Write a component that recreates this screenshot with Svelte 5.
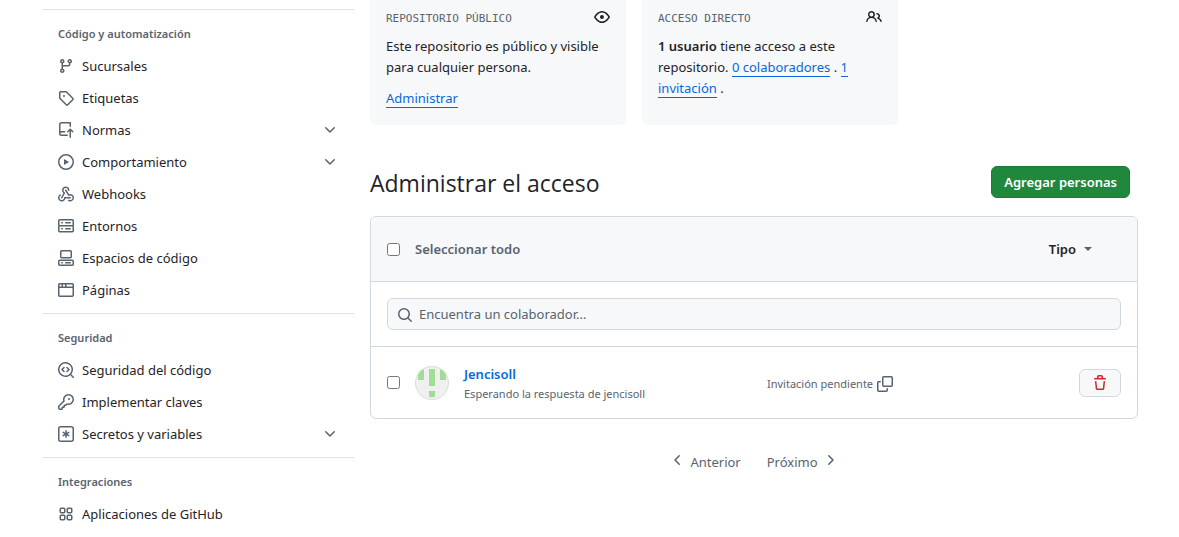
<script>
  const icons = {
    branch: 'M9.5 3.25a2.25 2.25 0 1 1 3 2.122V6A2.5 2.5 0 0 1 10 8.5H6a1 1 0 0 0-1 1v1.128a2.251 2.251 0 1 1-1.5 0V5.372a2.25 2.25 0 1 1 1.5 0v1.836A2.493 2.493 0 0 1 6 7h4a1 1 0 0 0 1-1v-.628A2.25 2.25 0 0 1 9.5 3.25Zm-6 0a.75.75 0 1 0 1.5 0 .75.75 0 0 0-1.5 0Zm8.25-.75a.75.75 0 1 0 0 1.5.75.75 0 0 0 0-1.5ZM4.25 12a.75.75 0 1 0 0 1.5.75.75 0 0 0 0-1.5Z',
    tag: 'M1 7.775V2.75C1 1.784 1.784 1 2.75 1h5.025c.464 0 .91.184 1.238.513l6.25 6.25a1.75 1.75 0 0 1 0 2.474l-5.026 5.026a1.75 1.75 0 0 1-2.474 0l-6.25-6.25A1.752 1.752 0 0 1 1 7.775Zm1.5 0c0 .066.026.13.073.177l6.25 6.25a.25.25 0 0 0 .354 0l5.025-5.025a.25.25 0 0 0 0-.354l-6.25-6.25a.25.25 0 0 0-.177-.073H2.75a.25.25 0 0 0-.25.25ZM6 5a1 1 0 1 1 0 2 1 1 0 0 1 0-2Z',
    push: 'M1 2.5A2.5 2.5 0 0 1 3.5 0h8.75a.75.75 0 0 1 .75.75v3.5a.75.75 0 0 1-1.5 0V1.5h-8a1 1 0 0 0-1 1v6.708A2.493 2.493 0 0 1 3.5 9h3.25a.75.75 0 0 1 0 1.5H3.5a1 1 0 0 0 0 2h5.75a.75.75 0 0 1 0 1.5H3.5A2.5 2.5 0 0 1 1 11.5Zm13.23 7.79-1.225-1.224v6.184a.75.75 0 0 1-1.5 0V9.066L10.28 10.29a.75.75 0 0 1-1.06-1.061l2.505-2.504a.75.75 0 0 1 1.06 0L15.29 9.23a.751.751 0 0 1-.018 1.042.751.751 0 0 1-1.042.018Z',
    play: 'M8 0a8 8 0 1 1 0 16A8 8 0 0 1 8 0ZM1.5 8a6.5 6.5 0 1 0 13 0 6.5 6.5 0 0 0-13 0Zm4.879-2.773 4.264 2.559a.25.25 0 0 1 0 .428l-4.264 2.559A.25.25 0 0 1 6 10.559V5.442a.25.25 0 0 1 .379-.215Z',
    webhook: 'M5.5 4.25a2.25 2.25 0 0 1 4.5 0 .75.75 0 0 0 1.5 0 3.75 3.75 0 1 0-6.14 2.889l-2.272 4.258a.75.75 0 0 0 1.324.706L7 7.25a.75.75 0 0 0-.309-1.015A2.25 2.25 0 0 1 5.5 4.25Z M7.364 3.607a.75.75 0 0 1 1.03.257l2.608 4.349a3.75 3.75 0 1 1-.628 6.785.75.75 0 0 1 .752-1.299 2.25 2.25 0 1 0-.033-3.88.75.75 0 0 1-1.03-.256L7.107 4.636a.75.75 0 0 1 .257-1.03Z M2.9 8.776A.75.75 0 0 1 2.625 9.8 2.25 2.25 0 1 0 6 11.75a.75.75 0 0 1 .75-.751h5.5a.75.75 0 0 1 0 1.5H7.425a3.751 3.751 0 1 1-5.55-3.998.75.75 0 0 1 1.024.274Z',
    server: 'M1.75 1h12.5c.966 0 1.75.784 1.75 1.75v4c0 .372-.116.717-.314 1 .198.283.314.628.314 1v4a1.75 1.75 0 0 1-1.75 1.75H1.75A1.75 1.75 0 0 1 0 12.75v-4c0-.358.109-.707.314-1a1.739 1.739 0 0 1-.314-1v-4C0 1.784.784 1 1.75 1ZM1.5 2.75v4c0 .138.112.25.25.25h12.5a.25.25 0 0 0 .25-.25v-4a.25.25 0 0 0-.25-.25H1.75a.25.25 0 0 0-.25.25Zm.25 5.75a.25.25 0 0 0-.25.25v4c0 .138.112.25.25.25h12.5a.25.25 0 0 0 .25-.25v-4a.25.25 0 0 0-.25-.25ZM7 4.75A.75.75 0 0 1 7.75 4h4.5a.75.75 0 0 1 0 1.5h-4.5A.75.75 0 0 1 7 4.75ZM7.75 10h4.5a.75.75 0 0 1 0 1.5h-4.5a.75.75 0 0 1 0-1.5ZM3 4.75A.75.75 0 0 1 3.75 4h.5a.75.75 0 0 1 0 1.5h-.5A.75.75 0 0 1 3 4.75ZM3.75 10h.5a.75.75 0 0 1 0 1.5h-.5a.75.75 0 0 1 0-1.5Z',
    codespaces: 'M0 11.25c0-.966.784-1.75 1.75-1.75h12.5c.966 0 1.75.784 1.75 1.75v3A1.75 1.75 0 0 1 14.25 16H1.75A1.75 1.75 0 0 1 0 14.25Zm2-9.5C2 .784 2.784 0 3.75 0h8.5C13.216 0 14 .784 14 1.75v5a1.75 1.75 0 0 1-1.75 1.75h-8.5A1.75 1.75 0 0 1 2 6.75Zm1.75-.25a.25.25 0 0 0-.25.25v5c0 .138.112.25.25.25h8.5a.25.25 0 0 0 .25-.25v-5a.25.25 0 0 0-.25-.25Zm-2 9.5a.25.25 0 0 0-.25.25v3c0 .138.112.25.25.25h12.5a.25.25 0 0 0 .25-.25v-3a.25.25 0 0 0-.25-.25Z M7 12.75a.75.75 0 0 1 .75-.75h4.5a.75.75 0 0 1 0 1.5h-4.5a.75.75 0 0 1-.75-.75Zm-4 0a.75.75 0 0 1 .75-.75h.5a.75.75 0 0 1 0 1.5h-.5a.75.75 0 0 1-.75-.75Z',
    browser: 'M0 2.75C0 1.784.784 1 1.75 1h12.5c.966 0 1.75.784 1.75 1.75v10.5A1.75 1.75 0 0 1 14.25 15H1.75A1.75 1.75 0 0 1 0 13.25ZM14.5 6h-13v7.25c0 .138.112.25.25.25h12.5a.25.25 0 0 0 .25-.25Zm-6-3.5v2h6V2.75a.25.25 0 0 0-.25-.25ZM5 2.5v2h2v-2Zm-3.25 0a.25.25 0 0 0-.25.25V4.5h2v-2Z',
    codescan: 'M8.47 4.97a.75.75 0 0 0 0 1.06L9.94 7.5 8.47 8.97a.75.75 0 1 0 1.06 1.06l2-2a.75.75 0 0 0 0-1.06l-2-2a.75.75 0 0 0-1.06 0ZM6.53 6.03a.75.75 0 0 0-1.06-1.06l-2 2a.75.75 0 0 0 0 1.06l2 2a.75.75 0 1 0 1.06-1.06L5.06 7.5l1.47-1.47Z M12.246 13.307a7.501 7.501 0 1 1 1.06-1.06l2.474 2.473a.749.749 0 0 1-.326 1.275.749.749 0 0 1-.734-.215ZM1.5 7.5a6.002 6.002 0 0 0 3.608 5.504 6.002 6.002 0 0 0 6.486-1.117.748.748 0 0 1 .292-.293A6 6 0 1 0 1.5 7.5Z',
    key: 'M10.5 0a5.499 5.499 0 1 1-1.288 10.848l-.932.932a.749.749 0 0 1-.53.22H7v.75a.749.749 0 0 1-.22.53l-.5.5a.749.749 0 0 1-.53.22H5v.75a.749.749 0 0 1-.22.53l-.5.5a.749.749 0 0 1-.53.22h-2A1.75 1.75 0 0 1 0 14.25v-2c0-.199.079-.389.22-.53l4.932-4.932A5.5 5.5 0 0 1 10.5 0Zm-4 5.5c-.001.431.069.86.205 1.269a.75.75 0 0 1-.181.768L1.5 12.56v1.69c0 .138.112.25.25.25h1.69l.06-.06v-1.19a.75.75 0 0 1 .75-.75h1.19l.06-.06v-1.19a.75.75 0 0 1 .75-.75h1.19l1.023-1.025a.75.75 0 0 1 .768-.18A4 4 0 1 0 6.5 5.5ZM11 6a1 1 0 1 1 0-2 1 1 0 0 1 0 2Z',
    asterisk: 'M0 2.75A2.75 2.75 0 0 1 2.75 0h10.5A2.75 2.75 0 0 1 16 2.75v10.5A2.75 2.75 0 0 1 13.25 16H2.75A2.75 2.75 0 0 1 0 13.25ZM2.75 1.5c-.69 0-1.25.56-1.25 1.25v10.5c0 .69.56 1.25 1.25 1.25h10.5c.69 0 1.25-.56 1.25-1.25V2.75c0-.69-.56-1.25-1.25-1.25Z M8 4a.75.75 0 0 1 .75.75V6.7l1.69-.975a.75.75 0 0 1 .75 1.3L9.5 8l1.69.976a.75.75 0 0 1-.75 1.298L8.75 9.3v1.951a.75.75 0 0 1-1.5 0V9.299l-1.69.976a.75.75 0 0 1-.75-1.3L6.5 8l-1.69-.975a.75.75 0 0 1 .75-1.3l1.69.976V4.75A.75.75 0 0 1 8 4Z',
    apps: 'M1.5 3.25c0-.966.784-1.75 1.75-1.75h2.5c.966 0 1.75.784 1.75 1.75v2.5A1.75 1.75 0 0 1 5.75 7.5h-2.5A1.75 1.75 0 0 1 1.5 5.75Zm7 0c0-.966.784-1.75 1.75-1.75h2.5c.966 0 1.75.784 1.75 1.75v2.5a1.75 1.75 0 0 1-1.75 1.75h-2.5A1.75 1.75 0 0 1 8.5 5.75Zm-7 7c0-.966.784-1.75 1.75-1.75h2.5c.966 0 1.75.784 1.75 1.75v2.5a1.75 1.75 0 0 1-1.75 1.75h-2.5a1.75 1.75 0 0 1-1.75-1.75Zm7 0c0-.966.784-1.75 1.75-1.75h2.5c.966 0 1.75.784 1.75 1.75v2.5a1.75 1.75 0 0 1-1.75 1.75h-2.5a1.75 1.75 0 0 1-1.75-1.75ZM3.25 3a.25.25 0 0 0-.25.25v2.5c0 .138.112.25.25.25h2.5A.25.25 0 0 0 6 5.75v-2.5A.25.25 0 0 0 5.75 3Zm7 0a.25.25 0 0 0-.25.25v2.5c0 .138.112.25.25.25h2.5a.25.25 0 0 0 .25-.25v-2.5a.25.25 0 0 0-.25-.25Zm-7 7a.25.25 0 0 0-.25.25v2.5c0 .138.112.25.25.25h2.5a.25.25 0 0 0 .25-.25v-2.5a.25.25 0 0 0-.25-.25Zm7 0a.25.25 0 0 0-.25.25v2.5c0 .138.112.25.25.25h2.5a.25.25 0 0 0 .25-.25v-2.5a.25.25 0 0 0-.25-.25Z',
    eye: 'M8 2c1.981 0 3.671.992 4.933 2.078 1.27 1.091 2.187 2.345 2.637 3.023a1.62 1.62 0 0 1 0 1.798c-.45.678-1.367 1.932-2.637 3.023C11.67 13.008 9.981 14 8 14c-1.981 0-3.671-.992-4.933-2.078C1.797 10.83.88 9.576.43 8.898a1.62 1.62 0 0 1 0-1.798c.45-.677 1.367-1.931 2.637-3.022C4.33 2.992 6.019 2 8 2ZM1.679 7.932a.12.12 0 0 0 0 .136c.411.622 1.241 1.75 2.366 2.717C5.176 11.758 6.527 12.5 8 12.5c1.473 0 2.825-.742 3.955-1.715 1.124-.967 1.954-2.096 2.366-2.717a.12.12 0 0 0 0-.136c-.412-.621-1.242-1.75-2.366-2.717C10.824 4.242 9.473 3.5 8 3.5c-1.473 0-2.825.742-3.955 1.715-1.124.967-1.954 2.096-2.366 2.717ZM8 10a2 2 0 1 1-.001-3.999A2 2 0 0 1 8 10Z',
    people: 'M2 5.5a3.5 3.5 0 1 1 5.898 2.549 5.508 5.508 0 0 1 3.034 4.084.75.75 0 1 1-1.482.235 4 4 0 0 0-7.9 0 .75.75 0 0 1-1.482-.236A5.507 5.507 0 0 1 3.102 8.05 3.493 3.493 0 0 1 2 5.5ZM11 4a3.001 3.001 0 0 1 2.22 5.018 5.01 5.01 0 0 1 2.56 3.012.749.749 0 0 1-.885.954.752.752 0 0 1-.549-.514 3.507 3.507 0 0 0-2.522-2.372.75.75 0 0 1-.574-.73v-.352a.75.75 0 0 1 .416-.672A1.5 1.5 0 0 0 11 5.5.75.75 0 0 1 11 4Zm-5.5-.5a2 2 0 1 0-.001 3.999A2 2 0 0 0 5.5 3.5Z',
    search: 'M10.68 11.74a6 6 0 0 1-7.922-8.982 6 6 0 0 1 8.982 7.922l3.04 3.04a.749.749 0 0 1-.326 1.275.749.749 0 0 1-.734-.215ZM11.5 7a4.499 4.499 0 1 0-8.997 0A4.499 4.499 0 0 0 11.5 7Z',
    trash: 'M11 1.75V3h2.25a.75.75 0 0 1 0 1.5H2.75a.75.75 0 0 1 0-1.5H5V1.75C5 .784 5.784 0 6.75 0h2.5C10.216 0 11 .784 11 1.75ZM4.496 6.675l.66 6.6a.25.25 0 0 0 .249.225h5.19a.25.25 0 0 0 .249-.225l.66-6.6a.75.75 0 0 1 1.492.149l-.66 6.6A1.748 1.748 0 0 1 10.595 15h-5.19a1.75 1.75 0 0 1-1.741-1.575l-.66-6.6a.75.75 0 1 1 1.492-.15ZM6.5 1.75V3h3V1.75a.25.25 0 0 0-.25-.25h-2.5a.25.25 0 0 0-.25.25Z',
    copy: 'M0 6.75C0 5.784.784 5 1.75 5h1.5a.75.75 0 0 1 0 1.5h-1.5a.25.25 0 0 0-.25.25v7.5c0 .138.112.25.25.25h7.5a.25.25 0 0 0 .25-.25v-1.5a.75.75 0 0 1 1.5 0v1.5A1.75 1.75 0 0 1 9.25 16h-7.5A1.75 1.75 0 0 1 0 14.25Z M5 1.75C5 .784 5.784 0 6.75 0h7.5C15.216 0 16 .784 16 1.75v7.5A1.75 1.75 0 0 1 14.25 11h-7.5A1.75 1.75 0 0 1 5 9.25Zm1.75-.25a.25.25 0 0 0-.25.25v7.5c0 .138.112.25.25.25h7.5a.25.25 0 0 0 .25-.25v-7.5a.25.25 0 0 0-.25-.25Z',
    down: 'M12.78 5.22a.749.749 0 0 1 0 1.06l-4.25 4.25a.749.749 0 0 1-1.06 0L3.22 6.28a.749.749 0 1 1 1.06-1.06L8 8.939l3.72-3.719a.749.749 0 0 1 1.06 0Z',
    left: 'M9.78 12.78a.75.75 0 0 1-1.06 0L4.47 8.53a.75.75 0 0 1 0-1.06l4.25-4.25a.751.751 0 0 1 1.06 1.06L6.06 8l3.72 3.72a.75.75 0 0 1 0 1.06Z',
    right: 'M6.22 3.22a.75.75 0 0 1 1.06 0l4.25 4.25a.75.75 0 0 1 0 1.06l-4.25 4.25a.751.751 0 0 1-1.06-1.06L9.94 8 6.22 4.28a.75.75 0 0 1 0-1.06Z',
  };

  const groups = [
    {
      title: 'Código y automatización',
      items: [
        { label: 'Sucursales', icon: 'branch' },
        { label: 'Etiquetas', icon: 'tag' },
        { label: 'Normas', icon: 'push', expandable: true },
        { label: 'Comportamiento', icon: 'play', expandable: true },
        { label: 'Webhooks', icon: 'webhook' },
        { label: 'Entornos', icon: 'server' },
        { label: 'Espacios de código', icon: 'codespaces' },
        { label: 'Páginas', icon: 'browser' },
      ],
    },
    {
      title: 'Seguridad',
      items: [
        { label: 'Seguridad del código', icon: 'codescan' },
        { label: 'Implementar claves', icon: 'key' },
        { label: 'Secretos y variables', icon: 'asterisk', expandable: true },
      ],
    },
    {
      title: 'Integraciones',
      items: [{ label: 'Aplicaciones de GitHub', icon: 'apps' }],
    },
  ];
</script>

{#snippet icon(name, size = 16)}
  <svg class="icon" width={size} height={size} viewBox="0 0 16 16" aria-hidden="true"><path d={icons[name]} /></svg>
{/snippet}

<div class="layout">
  <nav class="sidebar">
    {#each groups as group}
      <section class="group">
        <h3>{group.title}</h3>
        <ul>
          {#each group.items as item}
            <li>
              {#if item.expandable}
                <button type="button" class="nav-item">
                  {@render icon(item.icon)}
                  <span class="nav-label">{item.label}</span>
                  {@render icon('down')}
                </button>
              {:else}
                <a class="nav-item" href="#top">
                  {@render icon(item.icon)}
                  <span class="nav-label">{item.label}</span>
                </a>
              {/if}
            </li>
          {/each}
        </ul>
      </section>
    {/each}
  </nav>

  <main>
    <div class="cards">
      <section class="card">
        <header><h4>REPOSITORIO PÚBLICO</h4>{@render icon('eye')}</header>
        <p>Este repositorio es público y visible para cualquier persona.</p>
        <p><a href="#top">Administrar</a></p>
      </section>
      <section class="card">
        <header><h4>ACCESO DIRECTO</h4>{@render icon('people')}</header>
        <p>
          <strong>1 usuario</strong> tiene acceso a este repositorio. <a href="#top">0 colaboradores</a> . <a href="#top">1 invitación</a> .
        </p>
      </section>
    </div>

    <div class="title-row">
      <h2>Administrar el acceso</h2>
      <button type="button" class="primary">Agregar personas</button>
    </div>

    <div class="box">
      <div class="box-head">
        <label class="select-all"><input type="checkbox" /><span>Seleccionar todo</span></label>
        <button type="button" class="type">Tipo<span class="caret"></span></button>
      </div>
      <div class="box-search">
        <label class="search">
          {@render icon('search')}
          <input type="text" placeholder="Encuentra un colaborador..." aria-label="Encuentra un colaborador..." />
        </label>
      </div>
      <div class="member">
        <input type="checkbox" aria-label="Jencisoll" />
        <svg class="avatar" width="34" height="34" viewBox="0 0 34 34" aria-hidden="true">
          <defs><clipPath id="round"><circle cx="17" cy="17" r="17" /></clipPath></defs>
          <g clip-path="url(#round)">
            <rect width="34" height="34" fill="#f0f0f0" />
            <path fill="#a1dd97" d="M3 3h6v11H3zM14 3h6v17h-6zM25 3h6v11h-6zM14 25h6v6h-6z" />
          </g>
          <circle cx="17" cy="17" r="16.5" fill="none" stroke="#dcdfe2" />
        </svg>
        <div class="who">
          <a href="#top">Jencisoll</a>
          <span>Esperando la respuesta de jencisoll</span>
        </div>
        <div class="status">
          <span>Invitación pendiente</span>
          <button type="button" class="copy" aria-label="Copiar">{@render icon('copy')}</button>
        </div>
        <button type="button" class="remove" aria-label="Eliminar">{@render icon('trash')}</button>
      </div>
    </div>

    <div class="pager">
      <button type="button">{@render icon('left')}<span>Anterior</span></button>
      <button type="button"><span>Próximo</span>{@render icon('right')}</button>
    </div>
  </main>
</div>

<style>
  :global(body) {
    margin: 0;
    background: #fff;
  }

  .layout {
    display: grid;
    grid-template-columns: 312px minmax(0, 1fr);
    gap: 16px;
    padding: 0 41px 0 42px;
    color: #1f2328;
    font: 13px/21px 'Noto Sans', sans-serif;
  }

  h2, h3, h4, p, ul {
    margin: 0;
    padding: 0;
  }

  button, input {
    font: inherit;
    color: inherit;
  }

  button {
    margin: 0;
    padding: 0;
    border: 0;
    background: none;
    cursor: pointer;
  }

  a {
    color: #0969da;
  }

  .icon {
    display: block;
    flex: none;
    fill: currentColor;
  }

  .sidebar {
    padding-top: 9px;
  }

  .group {
    padding: 8px 16px 7px;
    border-top: 1px solid #dfe4e8;
  }

  .group h3 {
    color: #59636e;
    font-size: 11px;
    font-weight: 600;
    line-height: 32px;
  }

  .group ul {
    list-style: none;
  }

  .nav-item {
    display: flex;
    align-items: center;
    gap: 8px;
    width: 100%;
    height: 32px;
    color: #59636e;
    text-align: left;
    text-decoration: none;
  }

  .nav-label {
    flex: 1;
    color: #1f2328;
  }

  .cards {
    display: grid;
    grid-template-columns: repeat(2, calc(100% / 3));
    gap: 16px;
    min-height: 125px;
  }

  .card {
    padding: 8px 16px 16px;
    border-radius: 0 0 6px 6px;
    background: #f6f8fa;
  }

  .card header {
    display: flex;
    align-items: flex-start;
    justify-content: space-between;
    height: 20px;
    margin-bottom: 8px;
  }

  .card header :global(.icon) {
    margin-top: 1px;
  }

  .card h4 {
    color: #59636e;
    font: 11px/21px 'DejaVu Sans Mono', monospace;
  }

  .card p + p {
    margin-top: 10px;
  }

  .card a {
    text-decoration: none;
    border-bottom: 1px solid #0969da;
  }

  strong {
    font-weight: 600;
  }

  .title-row {
    display: flex;
    align-items: center;
    justify-content: space-between;
    margin: 41px 8px 18px 0;
  }

  h2 {
    font-family: 'Open Sans', sans-serif;
    font-size: 23px;
    font-weight: 400;
    line-height: 30px;
    padding-top: 2px;
  }

  .primary {
    height: 32px;
    padding: 0 12px;
    border: 1px solid #1c7a36;
    border-radius: 6px;
    background: #1f883d;
    color: #fff;
    font-weight: 600;
  }

  .box {
    border: 1px solid #d1d9e0;
    border-radius: 6px;
    overflow: hidden;
  }

  .box-head {
    display: flex;
    align-items: center;
    justify-content: space-between;
    height: 64px;
    padding: 0 45px 0 16px;
    background: #f6f8fa;
  }

  input[type='checkbox'] {
    width: 13px;
    height: 13px;
    margin: 0;
  }

  .select-all {
    display: flex;
    align-items: center;
    gap: 15px;
    color: #59636e;
    font-weight: 600;
  }

  .type {
    display: flex;
    align-items: center;
    gap: 8px;
    font-weight: 600;
  }

  .caret {
    border: 4px solid transparent;
    border-top-color: #59636e;
    border-bottom: 0;
  }

  .box-search {
    padding: 16px;
    border-top: 1px solid #d1d9e0;
    border-bottom: 1px solid #d1d9e0;
  }

  .search {
    display: flex;
    align-items: center;
    gap: 6px;
    height: 30px;
    padding: 0 9px;
    border: 1px solid #d1d9e0;
    border-radius: 6px;
    background: #f6f8fa;
    color: #59636e;
  }

  .search :global(.icon) {
    margin-top: 2px;
  }

  .search input {
    flex: 1;
    min-width: 0;
    padding: 0;
    border: 0;
    outline: 0;
    background: none;
  }

  .search input::placeholder {
    color: #59636e;
    opacity: 1;
  }

  .member {
    display: grid;
    grid-template-columns: 13px 49px minmax(0, 318fr) minmax(0, 312fr) 42px;
    align-items: center;
    height: 71px;
    padding: 0 16px;
  }

  .avatar {
    display: block;
    margin-left: 15px;
  }

  .who {
    display: flex;
    flex-direction: column;
    margin-left: 15px;
    padding-top: 2px;
  }

  .who a {
    font-weight: 600;
    text-decoration: none;
  }

  .who span, .status {
    color: #59636e;
    font-size: 11px;
    line-height: 18px;
  }

  .status {
    display: flex;
    align-items: center;
    gap: 4px;
    padding-top: 2px;
  }

  .remove {
    display: grid;
    place-items: center;
    height: 28px;
    border: 1px solid #d1d9e0;
    border-radius: 6px;
    background: #f6f8fa;
    color: #d1242f;
  }

  .pager {
    display: flex;
    justify-content: center;
    gap: 26px;
    margin-top: 33px;
    color: #59636e;
  }

  .pager button {
    display: flex;
    align-items: flex-start;
    gap: 4px;
  }
</style>
